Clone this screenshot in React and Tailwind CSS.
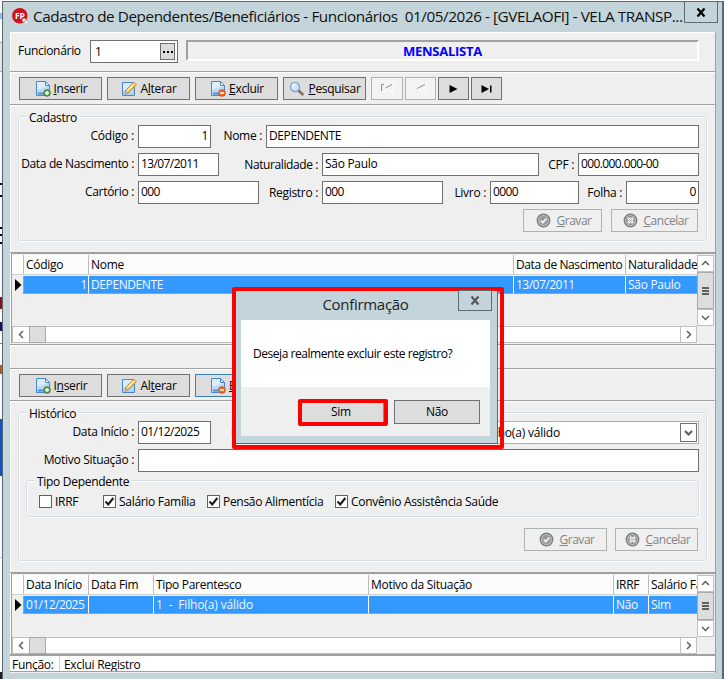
import React from "react";

const AccelText = ({ text, accel }) => {
  const i = text.indexOf(accel);
  return (
    <span className="whitespace-pre">
      {text.slice(0, i)}
      <span className="underline underline-offset-1">{accel}</span>
      {text.slice(i + 1)}
    </span>
  );
};

const PageBase = () => (
  <>
    <path d="M1.5 .5h9l4 4v10h-13z" fill="#dcedfc" stroke="#4a86cc" />
    <path d="M2 9l12-4v9H2z" fill="#b9d9f6" />
    <path d="M10.500 .5v4h4z" fill="#fff" stroke="#4a86cc" strokeLinejoin="round" />
    <path d="M3 12.500h6" stroke="#4f8fd8" strokeWidth="2" />
  </>
);

const InsertIcon = () => (
  <svg width="16" height="16" viewBox="0 0 16 16">
    <PageBase />
    <circle cx="12" cy="12" r="3.300" fill="#6aa856" stroke="#3f7d33" />
    <path d="M12 10v4M10 12h4" stroke="#fff" strokeWidth="1.300" />
  </svg>
);

const DeleteIcon = () => (
  <svg width="16" height="16" viewBox="0 0 16 16">
    <PageBase />
    <circle cx="12" cy="12" r="3.300" fill="#ee6a1f" stroke="#d2560f" />
    <path d="M10 12h4" stroke="#fff" strokeWidth="1.500" />
  </svg>
);

const EditIcon = () => (
  <svg width="16" height="16" viewBox="0 0 16 16">
    <path d="M1.500 1.500h12v13h-12z" fill="#d9ebfb" stroke="#4a86cc" />
    <path d="M2 10l11-4v8H2z" fill="#b3d5f5" />
    <path d="M4 13l1-4 8-8 2.500 2.500-8 8z" fill="#f8c75a" stroke="#b87a24" strokeWidth=".8" />
    <path d="M6 10l7-7" stroke="#fff0b8" strokeWidth="1.200" />
    <path d="M4 13l.8-3.200 2.400 2.400z" fill="#fbe8cd" stroke="#8a6a40" strokeWidth=".5" />
    <path d="M12 2l1.300-1.300 2.200 2.300-1.200 1.200z" fill="#f0b070" />
  </svg>
);

const SearchIcon = () => (
  <svg width="16" height="16" viewBox="0 0 16 16">
    <path d="M9.500 9.500l4 3.800" stroke="#8a6a55" strokeWidth="2.600" strokeLinecap="round" />
    <circle cx="6" cy="6" r="4.500" fill="#cfe7fc" stroke="#7ba3d8" strokeWidth="1.400" />
    <path d="M3.500 6a3 3 0 0 1 3-3" stroke="#fff" strokeWidth="1.300" fill="none" />
  </svg>
);

const OkIcon = () => (
  <svg width="15" height="15" viewBox="0 0 15 15">
    <circle cx="7.500" cy="7.500" r="6.200" fill="#c4c4c4" stroke="#7c7c7c" strokeWidth="1.400" />
    <circle cx="7.500" cy="7.500" r="4.600" fill="#989898" />
    <path d="M4.800 7.500l2 2.100 3.600-3.900" stroke="#f4f4f4" strokeWidth="1.800" fill="none" />
  </svg>
);

const CancelIcon = () => (
  <svg width="15" height="15" viewBox="0 0 15 15">
    <circle cx="7.500" cy="7.500" r="6.200" fill="#c4c4c4" stroke="#7c7c7c" strokeWidth="1.400" />
    <circle cx="7.500" cy="7.500" r="4.600" fill="#909090" />
    <path d="M5 5l5 5M10 5l-5 5" stroke="#f8f8f8" strokeWidth="2.600" />
    <path d="M5.800 5.800l3.400 3.400M9.200 5.800l-3.400 3.400" stroke="#a0a0a0" strokeWidth=".9" />
  </svg>
);

const AppLogo = () => (
  <svg width="17" height="17" viewBox="0 0 17 17">
    <circle cx="7.800" cy="7.800" r="7.700" fill="#cf1020" />
    <text x="7.800" y="11" textAnchor="middle" fontSize="8.500" fontWeight="700" fill="#fff">
      FP
    </text>
    <path d="M11 11l4 4M11 11v3M11 11h3" stroke="#fff" strokeWidth="1.200" />
  </svg>
);

const Chevron = ({ dir, bold }) => {
  const paths = {
    left: "M6 1L2.500 4.500L6 8",
    right: "M3 1L6.500 4.500L3 8",
    up: "M1 6L4.500 2.500L8 6",
    down: "M1 3L4.500 6.500L8 3",
  };
  return (
    <svg width="9" height="9" viewBox="0 0 9 9">
      <path d={paths[dir]} fill="none" stroke="#606060" strokeWidth={bold ? 2.2 : 1.5} />
    </svg>
  );
};

const ToolButton = ({ icon, text, accel, active }) => (
  <button
    className={`flex h-[23px] w-[83px] items-center justify-center gap-[3px] border bg-[#dddddd] pl-px ${
      active ? "border-[#3c7fb1]" : "border-[#707070]"
    }`}
  >
    {icon}
    <AccelText text={text} accel={accel} />
  </button>
);

const DisabledButton = ({ icon, text, accel, className }) => (
  <button
    className={`flex h-[23px] items-center justify-center gap-[5px] border border-[#adb2b5] bg-[#efefef] pl-[3px] tracking-[-0.45px] text-[#838383] ${className}`}
  >
    {icon}
    <AccelText text={text} accel={accel} />
  </button>
);

const NavButton = ({ children, disabled, className }) => (
  <button
    className={`flex h-[23px] items-center justify-center border ${
      disabled ? "border-[#adb2b5] bg-[#f3f3f3]" : "border-[#707070] bg-[#dddddd]"
    } ${className}`}
  >
    {children}
  </button>
);

const Label = ({ text, className }) => (
  <label className={`shrink-0 text-right whitespace-pre ${className}`}>{text}</label>
);

const Field = ({ value, className }) => (
  <div
    className={`flex h-[23px] shrink-0 items-start border border-[#707070] bg-white px-[2px] pt-px ${className}`}
  >
    {value}
  </div>
);

const GroupBox = ({ title, className, children }) => (
  <div className={`relative rounded-[3px] border border-[#d5dfe5] shadow-[inset_1px_1px_0_#fff,1px_1px_0_#fff] ${className}`}>
    <span className="absolute -top-[8px] left-[8px] bg-[#efefef] px-[2px] leading-[17px]">{title}</span>
    {children}
  </div>
);

const CheckItem = ({ label, checked, className }) => (
  <div className={`flex shrink-0 items-start gap-[3px] ${className}`}>
    <div className="flex h-[13px] w-[13px] items-center justify-center border border-[#606060] bg-white">
      {checked && (
        <svg width="11" height="11" viewBox="0 0 11 11">
          <path d="M1.500 5.500l2.800 3 5-6.500" fill="none" stroke="#1c1c1c" strokeWidth="2.100" />
        </svg>
      )}
    </div>
    <span className="-mt-[2px] whitespace-nowrap">{label}</span>
  </div>
);

const Grid = ({ columns, thumb, gap }) => (
  <div className="border-t border-l border-[#a0a0a0] bg-[#efefef] pt-px">
    <div className="flex">
      <div className="w-[685px]">
        <div className="flex h-[20px] border-b border-[#d0d0d0] bg-[#fcfcfc]">
          <div className="w-[12px] border-r border-[#bcbcbc]" />
          {columns.map((c) => (
            <div
              key={c.title}
              className={`overflow-hidden border-r border-[#bcbcbc] pl-[2px] leading-[20px] whitespace-nowrap last:border-r-0 ${c.width} ${c.head || ""}`}
            >
              {c.title}
            </div>
          ))}
        </div>
        <div className="flex h-[19px] pt-px">
          <div className="flex w-[12px] items-center justify-end border-r border-[#a0a0a0] pr-[1px]">
            <svg width="7" height="12" viewBox="0 0 7 12">
              <path d="M0 0l6.500 6L0 12z" fill="#000" />
            </svg>
          </div>
          {columns.map((c) => (
            <div
              key={c.title}
              className={`border-r border-b border-r-white border-b-[#a0a0a0] bg-[#3399ff] pl-[2px] leading-[17px] whitespace-pre text-[#f2f8ff] last:border-r-0 ${c.width} ${c.cell || ""}`}
            >
              {c.value}
            </div>
          ))}
        </div>
        <div className={gap} />
      </div>
      <div className="flex w-[17px] flex-col">
        <div className="flex h-[17px] items-center justify-center border border-[#c0c0c0] bg-white">
          <Chevron dir="up" />
        </div>
        <div className={`flex flex-col items-center justify-center gap-[1px] border border-[#a8a8a8] bg-[#dddddd] ${thumb}`}>
          <div className="h-[2px] w-[7px] bg-[#606060]" />
          <div className="h-[2px] w-[7px] bg-[#606060]" />
          <div className="h-[2px] w-[7px] bg-[#606060]" />
        </div>
        <div className="flex h-[17px] items-center justify-center border border-[#c0c0c0] bg-white">
          <Chevron dir="down" />
        </div>
      </div>
    </div>
    <div className="flex h-[17px] w-[685px] border border-[#c0c0c0] bg-white">
      <div className="flex w-[16px] items-center justify-center">
        <Chevron dir="left" />
      </div>
      <div className="-my-px w-[17px] border border-[#a8a8a8] bg-[#dddddd]" />
      <div className="ml-auto flex w-[16px] items-center justify-center border-l border-[#c0c0c0]">
        <Chevron dir="right" />
      </div>
    </div>
  </div>
);

const dependentColumns = [
  { title: "Código", value: "1", width: "w-[65px]", cell: "text-right pr-px" },
  { title: "Nome", value: "DEPENDENTE", width: "w-[425px]", cell: "tracking-[-0.4px]" },
  {
    title: "Data de Nascimento",
    value: "13/07/2011",
    width: "w-[112px]",
    head: "tracking-[-0.4px]",
    cell: "tracking-[-0.5px]",
  },
  { title: "Naturalidade", value: "São Paulo", width: "w-[71px]" },
];

const historyColumns = [
  { title: "Data Início", value: "01/12/2025", width: "w-[65px]", cell: "tracking-[-0.55px]" },
  { title: "Data Fim", value: "", width: "w-[65px]" },
  { title: "Tipo Parentesco", value: "1  -  Filho(a) válido", width: "w-[215px]", cell: "tracking-[-0.15px]" },
  { title: "Motivo da Situação", value: "", width: "w-[245px]" },
  { title: "IRRF", value: "Não", width: "w-[35px]" },
  { title: "Salário Família", value: "Sim", width: "w-[48px]" },
];

// Slivers of the window underneath, top to bottom
const backdrop = [
  "h-[13px] bg-white",
  "h-[6px] bg-[#8fc0ee]",
  "h-[23px] bg-white",
  "h-[1px] bg-[#a0a0a0]",
  "h-[28px] bg-[#e4e4e4]",
  "h-[1px] bg-[#a0a0a0]",
  "h-[111px] bg-[#f8f8ff]",
  "h-[2px] bg-black",
  "h-[10px] bg-[#f8f8ff]",
  "h-[2px] bg-black",
  "h-[30px] bg-[#f8f8ff]",
  "h-[2px] bg-black",
  "h-[5px] bg-[#f8f8ff]",
  "h-[2px] bg-black",
  "h-[6px] bg-[#f8f8ff]",
  "h-[2px] bg-black",
  "h-[53px] bg-[#f8f8ff]",
  "h-[12px] bg-[#8b1010]",
  "h-[13px] bg-white",
  "h-[9px] bg-[#101070]",
  "h-[12px] bg-white",
  "h-[1px] bg-[#808080]",
  "h-[21px] bg-white",
  "h-[9px] bg-[#b85a10]",
  "h-[45px] bg-[#f8f8ff]",
  "h-[57px] bg-[#0a50c8]",
  "h-[81px] bg-[#f8f8ff]",
  "h-[1px] bg-[#c0c8d0]",
  "h-[114px] bg-white",
  "h-[7px] bg-[#202020]",
];

const Toolbar = ({ active, accels, nav }) => (
  <div className="flex gap-[5px] pl-[9px]">
    <ToolButton icon={<InsertIcon />} text="Inserir" accel={accels[0]} />
    <ToolButton icon={<EditIcon />} text="Alterar" accel={accels[1]} />
    <ToolButton icon={<DeleteIcon />} text="Excluir" accel="E" active={active} />
    {nav}
  </div>
);

const ConfirmDialog = () => (
  <div className="absolute top-[287px] left-[232px] h-[162px] w-[272px] rounded-[2px] border-4 border-[#ff0000]">
    <div className="flex h-[153px] w-[262px] flex-col border-r border-b border-[#5c6670] bg-[#c3d5da] pr-[7px] pb-[7px] pl-[5px]">
      <div className="relative flex h-[29px] shrink-0 items-center justify-center text-[15px] text-[#222]">
        <span className="-mt-[2px]">Confirmação</span>
        <div className="absolute -top-px -right-[2px] flex h-[21px] w-[34px] items-center justify-center border border-[#5f6b72]">
          <svg width="10" height="9" viewBox="0 0 10 9">
            <path d="M1.500 .5l7 8M8.500 .5l-7 8" stroke="#555" strokeWidth="2.200" />
          </svg>
        </div>
      </div>
      <div className="flex h-[67px] shrink-0 items-center bg-white pl-[12px] tracking-[-0.45px]">
        Deseja realmente excluir este registro?
      </div>
      <div className="flex flex-1 gap-[6px] bg-[#efefef] pt-[12px] pl-[57px]">
        <button className="h-[27px] w-[90px] rounded-[2px] border-4 border-[#ff0000] bg-[#dddddd] pr-[4px] pb-[2px] leading-[17px] shadow-[inset_-1px_0_0_#a08080]">
          Sim
        </button>
        <button className="mt-px h-[24px] w-[86px] border border-[#707070] bg-[#dddddd] pb-px">Não</button>
      </div>
    </div>
  </div>
);

const App = () => {
  return (
    <div className="relative flex h-[679px] w-[724px] overflow-hidden bg-white font-['Open_Sans',sans-serif] text-[12px] leading-[17px] tracking-[-0.3px] text-black">
      <div className="flex w-[2px] shrink-0 flex-col">
        {backdrop.map((cls, i) => (
          <div key={i} className={`shrink-0 ${cls}`} />
        ))}
      </div>

      <div className="mt-px w-[722px] border-t border-r-2 border-l border-[#5b6670] bg-[#c3d5da] pl-[7px]">
        {/* Title bar */}
        <div className="flex h-[30px] pl-[2px]">
          <div className="pt-[6px]">
            <AppLogo />
          </div>
          <div className="w-[655px] pt-[2px] pl-[4px] text-[15.3px] leading-[24px] tracking-[-0.44px] whitespace-pre text-[#111]">
            Cadastro de Dependentes/Beneficiários - Funcionários  01/05/2026 - [GVELAOFI] - VELA TRANSP...
          </div>
          <div className="flex h-[21px] w-[34px] shrink-0 items-center justify-center border border-t-0 border-[#5f6b72]">
            <svg width="10" height="9" viewBox="0 0 10 9">
              <path d="M1.500 .5l7 8M8.500 .5l-7 8" stroke="#000" strokeWidth="2.200" />
            </svg>
          </div>
        </div>

        <div className="h-[641px] w-[706px] border-r border-[#a0a0a0] bg-[#efefef] shadow-[inset_1px_1px_0_#fff]">
          {/* Employee */}
          <div className="flex h-[40px] border-b border-[#a0a0a0] pt-[8px] pl-[8px]">
            <span className="w-[72px] pt-[2px]">Funcionário</span>
            <div className="flex h-[23px] w-[88px] items-center justify-between border border-[#707070] bg-white pr-[2px] pl-[4px]">
              <span className="-mt-px">1</span>
              <div className="flex h-[17px] w-[15px] items-center justify-center gap-[2px] border border-[#707070] bg-[#dddddd]">
                <i className="h-[2px] w-[2px] bg-black" />
                <i className="h-[2px] w-[2px] bg-black" />
                <i className="h-[2px] w-[2px] bg-black" />
              </div>
            </div>
            <div className="ml-[8px] h-[21px] w-[513px] border-2 border-t-[#a0a0a0] border-r-white border-b-white border-l-[#a0a0a0] text-center text-[13px] leading-[19px] font-bold tracking-[-0.25px] text-[#0000ff]">
              MENSALISTA
            </div>
          </div>

          {/* Main toolbar */}
          <div className="h-[33px] border-t border-b border-t-white border-b-[#a0a0a0] pt-[4px]">
            <Toolbar
              accels={["I", "l"]}
              nav={
                <>
                  <ToolButton icon={<SearchIcon />} text="Pesquisar" accel="P" />
                  <div className="flex gap-[2px]">
                    <NavButton disabled className="w-[32px]">
                      <svg width="14" height="11" viewBox="0 0 14 11">
                        <path d="M1.500 8V1.500H4M12 1.500L5.500 5" stroke="#8c8c8c" fill="none" />
                        <path d="M6 5.500l6.500 4V2M3 9h2" stroke="#fff" fill="none" />
                      </svg>
                    </NavButton>
                    <NavButton disabled className="w-[31px]">
                      <svg width="12" height="11" viewBox="0 0 12 11">
                        <path d="M10 1.500L2 5.500" stroke="#8c8c8c" fill="none" />
                        <path d="M3 6l7.500 3.500V2" stroke="#fff" fill="none" />
                      </svg>
                    </NavButton>
                    <NavButton className="w-[31px]">
                      <svg width="9" height="8" viewBox="0 0 9 8">
                        <path d="M.5 0l8 4-8 4z" />
                      </svg>
                    </NavButton>
                    <NavButton className="w-[31px]">
                      <svg width="11" height="8" viewBox="0 0 11 8">
                        <path d="M.5 0l7.500 4-7.500 4zM9 .5h1.500v7H9z" />
                      </svg>
                    </NavButton>
                  </div>
                </>
              }
            />
          </div>

          {/* Cadastro */}
          <div className="h-[147px] border-t border-white pt-[10px] pl-[8px]">
            <GroupBox title="Cadastro" className="flex h-[125px] w-[689px] flex-col gap-[5px] pt-[8px]">
              <div className="flex">
                <Label text="Código :" className="w-[115px] pt-[2px] tracking-[-0.2px]" />
                <Field value="1" className="ml-[4px] w-[73px] justify-end" />
                <Label text="Nome :" className="w-[51px] pt-[2px]" />
                <Field value="DEPENDENTE" className="ml-[4px] w-[433px] tracking-[-0.4px]" />
              </div>
              <div className="flex">
                <Label text="Data de Nascimento :" className="w-[115px] pt-[2px] tracking-[-0.35px]" />
                <Field value="13/07/2011" className="ml-[4px] w-[81px] tracking-[-0.6px]" />
                <Label text="Naturalidade :" className="w-[99px] pt-[3px] tracking-[-0.4px]" />
                <Field value="São Paulo" className="ml-[4px] w-[217px]" />
                <Label text="CPF :" className="w-[35px] pt-[3px]" />
                <Field value="000.000.000-00" className="ml-[4px] w-[121px] tracking-[-0.6px]" />
              </div>
              <div className="flex">
                <Label text="Cartório :" className="w-[115px] pt-[2px]" />
                <Field value="000" className="ml-[4px] w-[121px] tracking-[-0.6px]" />
                <Label text="Registro :" className="w-[59px] pt-[3px]" />
                <Field value="000" className="ml-[4px] w-[121px] tracking-[-0.6px]" />
                <Label text="Livro :" className="w-[43px] pt-[3px]" />
                <Field value="0000" className="ml-[4px] w-[89px] tracking-[-0.6px]" />
                <Label text="Folha :" className="w-[43px] pt-[3px]" />
                <Field value="0" className="ml-[4px] w-[73px] justify-end" />
              </div>
              <div className="flex gap-[9px] pl-[504px]">
                <DisabledButton icon={<OkIcon />} text="Gravar" accel="G" className="w-[79px]" />
                <DisabledButton icon={<CancelIcon />} text="Cancelar" accel="C" className="w-[87px]" />
              </div>
            </GroupBox>
          </div>

          <div className="h-[93px] border-t border-b border-[#a0a0a0] pl-px">
            <Grid columns={dependentColumns} thumb="h-[37px]" gap="h-[32px]" />
          </div>
          <div className="h-[24px] border-t border-b border-t-white border-b-[#a0a0a0]" />

          {/* History toolbar */}
          <div className="h-[32px] border-t border-b border-t-white border-b-[#a0a0a0] pt-[4px]">
            <Toolbar accels={["n", "t"]} active />
          </div>

          {/* Histórico */}
          <div className="h-[171px] border-t border-white pt-[10px] pl-[8px]">
            <GroupBox title="Histórico" className="h-[149px] w-[689px] pt-[8px]">
              <div className="flex">
                <Label text="Data Início :" className="w-[115px] pt-[2px]" />
                <Field value="01/12/2025" className="ml-[4px] w-[73px] tracking-[-0.55px]" />
                <Label text="Data Fim :" className="ml-[13px] w-[60px] pt-[3px] text-left" />
                <div className="ml-[145px] flex h-[23px] w-[270px] items-center justify-between border border-[#adadad] bg-white pr-px pl-[34px]">
                  <span className="tracking-[-0.2px] whitespace-pre">1  -  Filho(a) válido</span>
                  <div className="flex h-[19px] w-[17px] items-center justify-center border border-[#707070]">
                    <Chevron dir="down" bold />
                  </div>
                </div>
              </div>
              <div className="mt-[5px] flex">
                <Label text="Motivo Situação :" className="w-[115px] pt-[2px]" />
                <Field value="" className="ml-[4px] w-[561px]" />
              </div>
              <GroupBox title="Tipo Dependente" className="mt-[8px] ml-[7px] h-[37px] w-[673px] pt-[14px]">
                <div className="flex h-[14px] pl-[12px]">
                  <CheckItem label="IRRF" className="w-[64px]" />
                  <CheckItem label="Salário Família" checked className="w-[104px]" />
                  <CheckItem label="Pensão Alimentícia" checked className="w-[128px]" />
                  <CheckItem label="Convênio Assistência Saúde" checked />
                </div>
              </GroupBox>
              <div className="mt-[11px] flex gap-[8px] pl-[505px]">
                <DisabledButton icon={<OkIcon />} text="Gravar" accel="G" className="w-[83px]" />
                <DisabledButton icon={<CancelIcon />} text="Cancelar" accel="C" className="w-[83px]" />
              </div>
            </GroupBox>
          </div>

          <div className="h-[84px] border-t border-b-2 border-[#a0a0a0] pl-px">
            <Grid columns={historyColumns} thumb="h-[28px]" gap="h-[23px]" />
          </div>

          {/* Status bar */}
          <div className="flex h-[16px] overflow-hidden border-b border-[#a0a0a0] bg-white pl-[2px] leading-[18px]">
            <span className="w-[48px] border-r border-[#d0d0d0]">Função:</span>
            <span className="pl-[4px]">Exclui Registro</span>
          </div>
        </div>
      </div>

      <ConfirmDialog />
    </div>
  );
};

export default App;
